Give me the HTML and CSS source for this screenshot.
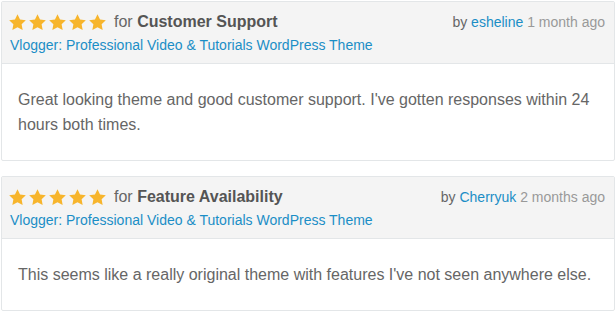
FILE: index.html
```html
<!DOCTYPE html>
<html lang="en">
<head>
    <meta charset="UTF-8">
    <meta name="viewport" content="width=device-width, initial-scale=1.0">
    <title>Reviews</title>
    <link rel="stylesheet" href="styles.css">
</head>
<body>
    <div class="reviews">
        <div class="review">
            <div class="review-head">
                <div class="head-row">
                    <div class="rating">
                        <span class="stars">
                            <svg viewBox="0 0 24 24"><path d="M12 1.5l3.2 6.6 7.3 1-5.3 5.1 1.3 7.2L12 18l-6.5 3.4 1.3-7.2-5.3-5.1 7.3-1z"/></svg>
                            <svg viewBox="0 0 24 24"><path d="M12 1.5l3.2 6.6 7.3 1-5.3 5.1 1.3 7.2L12 18l-6.5 3.4 1.3-7.2-5.3-5.1 7.3-1z"/></svg>
                            <svg viewBox="0 0 24 24"><path d="M12 1.5l3.2 6.6 7.3 1-5.3 5.1 1.3 7.2L12 18l-6.5 3.4 1.3-7.2-5.3-5.1 7.3-1z"/></svg>
                            <svg viewBox="0 0 24 24"><path d="M12 1.5l3.2 6.6 7.3 1-5.3 5.1 1.3 7.2L12 18l-6.5 3.4 1.3-7.2-5.3-5.1 7.3-1z"/></svg>
                            <svg viewBox="0 0 24 24"><path d="M12 1.5l3.2 6.6 7.3 1-5.3 5.1 1.3 7.2L12 18l-6.5 3.4 1.3-7.2-5.3-5.1 7.3-1z"/></svg>
                        </span>
                        <span class="for">for <b>Customer Support</b></span>
                    </div>
                    <div class="meta">by <a href="#">esheline</a> <span class="when">1 month ago</span></div>
                </div>
                <a class="item" href="#">Vlogger: Professional Video &amp; Tutorials WordPress Theme</a>
            </div>
            <div class="review-body">
                Great looking theme and good customer support. I've gotten responses within 24 hours both times.
            </div>
        </div>
        <div class="review">
            <div class="review-head">
                <div class="head-row">
                    <div class="rating">
                        <span class="stars">
                            <svg viewBox="0 0 24 24"><path d="M12 1.5l3.2 6.6 7.3 1-5.3 5.1 1.3 7.2L12 18l-6.5 3.4 1.3-7.2-5.3-5.1 7.3-1z"/></svg>
                            <svg viewBox="0 0 24 24"><path d="M12 1.5l3.2 6.6 7.3 1-5.3 5.1 1.3 7.2L12 18l-6.5 3.4 1.3-7.2-5.3-5.1 7.3-1z"/></svg>
                            <svg viewBox="0 0 24 24"><path d="M12 1.5l3.2 6.6 7.3 1-5.3 5.1 1.3 7.2L12 18l-6.5 3.4 1.3-7.2-5.3-5.1 7.3-1z"/></svg>
                            <svg viewBox="0 0 24 24"><path d="M12 1.5l3.2 6.6 7.3 1-5.3 5.1 1.3 7.2L12 18l-6.5 3.4 1.3-7.2-5.3-5.1 7.3-1z"/></svg>
                            <svg viewBox="0 0 24 24"><path d="M12 1.5l3.2 6.6 7.3 1-5.3 5.1 1.3 7.2L12 18l-6.5 3.4 1.3-7.2-5.3-5.1 7.3-1z"/></svg>
                        </span>
                        <span class="for">for <b>Feature Availability</b></span>
                    </div>
                    <div class="meta">by <a href="#">Cherryuk</a> <span class="when">2 months ago</span></div>
                </div>
                <a class="item" href="#">Vlogger: Professional Video &amp; Tutorials WordPress Theme</a>
            </div>
            <div class="review-body">
                This seems like a really original theme with features I've not seen anywhere else.
            </div>
        </div>
    </div>
</body>
</html>
```

FILE: styles.css
```css
body {
    font-family: 'Liberation Sans', Arial, sans-serif;
    background: #fff;
    margin: 0;
    padding: 1px 1px 0 1px;
    color: #555;
}
.reviews {
    display: flex;
    flex-direction: column;
    gap: 15px;
}
.review {
    border: 1px solid #e3e6e8;
    border-radius: 2px;
    width: 612px;
}
.review-head {
    background: #f4f4f4;
    border-bottom: 1px solid #e3e6e8;
    padding: 8px 9px 10px 6px;
    height: 43px;
}
.head-row {
    display: flex;
    justify-content: space-between;
    align-items: center;
    height: 24px;
}
.rating {
    display: flex;
    align-items: center;
}
.stars {
    display: flex;
    gap: 1px;
}
.stars svg {
    width: 19px;
    height: 19px;
    fill: #f7b52c;
}
.for {
    margin-left: 7px;
    font-size: 16px;
    color: #666;
}
.for b {
    color: #555;
}
.meta {
    font-size: 14px;
    color: #666;
}
.meta a {
    color: #1b8ec6;
    text-decoration: none;
}
.when {
    color: #999;
}
.item {
    display: block;
    margin-top: 3px;
    margin-left: 2px;
    font-size: 14px;
    color: #1b8ec6;
    text-decoration: none;
}
.review-body {
    padding: 23px 16px;
    font-size: 16px;
    line-height: 25px;
    color: #666;
}
```
